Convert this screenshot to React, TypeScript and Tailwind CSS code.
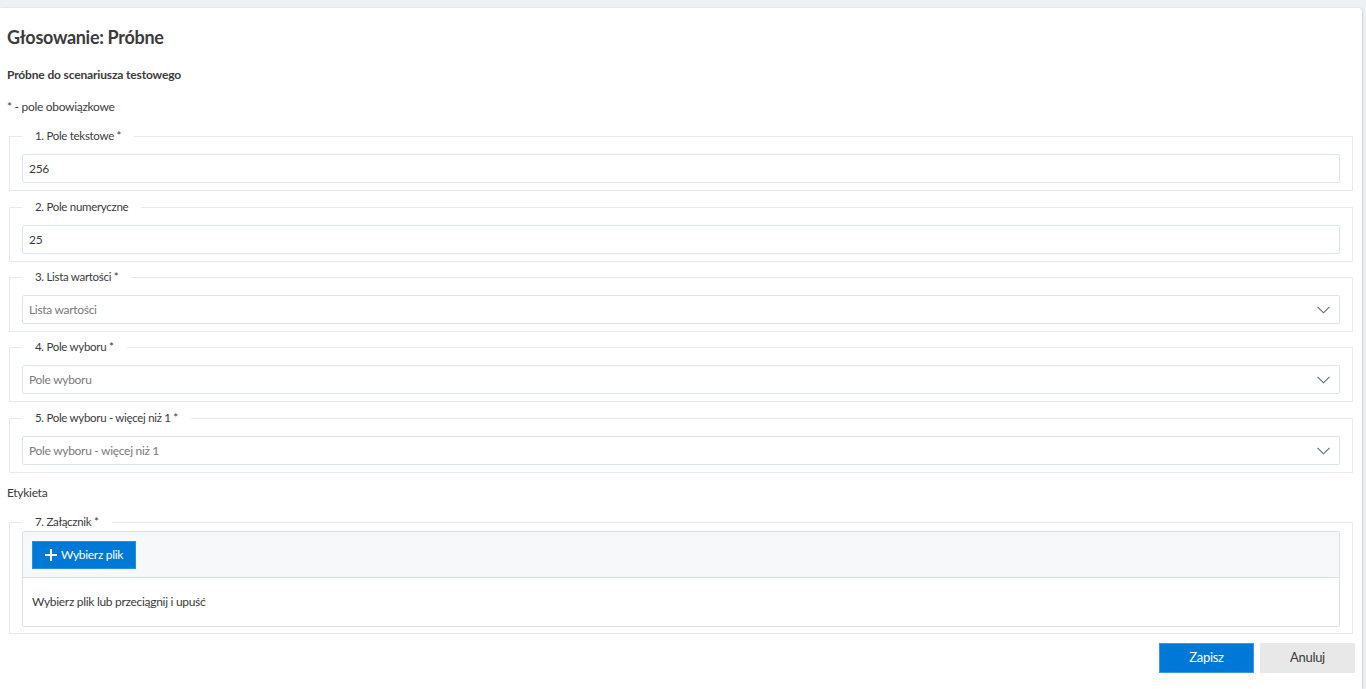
import { ReactNode } from "react";

const font = { fontFamily: '"Lato", "Liberation Sans", sans-serif' };

function Chevron() {
  return (
    <svg width="13" height="8" viewBox="0 0 13 8" fill="none" className="shrink-0">
      <path d="M0.5 0.8L6.5 6.8L12.5 0.8" stroke="#5a6b80" strokeWidth="1.1" />
    </svg>
  );
}

function Field({ legend, children, className = "" }: { legend: string; children: ReactNode; className?: string }) {
  return (
    <fieldset className={`mx-[2px] border border-[#e8ebee] px-[12px] pb-[7px] ${className}`}>
      <legend className="px-[13px] text-[11.5px] leading-[18px] text-[#3b3b3b]">{legend}</legend>
      {children}
    </fieldset>
  );
}

function TextInput({ value }: { value: string }) {
  return (
    <div className="mt-[9px] flex h-[29px] items-center rounded-[2px] border border-[#dbe3ec] px-[6px] text-[12px] text-[#3b3b3b]">
      {value}
    </div>
  );
}

function SelectBox({ placeholder }: { placeholder: string }) {
  return (
    <div className="mt-[9px] flex h-[29px] items-center justify-between rounded-[2px] border border-[#dbe3ec] pl-[6px] pr-[9px] text-[12px] text-[#7a7a7a]">
      <span>{placeholder}</span>
      <Chevron />
    </div>
  );
}

export default function App() {
  return (
    <div className="min-h-screen bg-[#eef1f4] pt-2 pr-1 tracking-[-0.3px]" style={font}>
      <div className="flex min-h-[681px] flex-col rounded-tr-[4px] bg-white px-[7px] pt-[17px] shadow-[1px_0_2px_rgba(0,0,0,0.12)]">
        <h1 className="text-[18px] font-bold leading-[24px] text-[#3b3b3b]">Głosowanie: Próbne</h1>
        <p className="mt-[18px] text-[12px] font-bold leading-[16px] tracking-[-0.15px] text-[#3b3b3b]">
          Próbne do scenariusza testowego
        </p>
        <p className="mt-[16px] text-[12px] leading-[16px] text-[#3b3b3b]">* - pole obowiązkowe</p>

        <Field legend="1. Pole tekstowe *" className="mt-[12px]">
          <TextInput value="256" />
        </Field>
        <Field legend="2. Pole numeryczne" className="mt-[7px]">
          <TextInput value="25" />
        </Field>
        <Field legend="3. Lista wartości *" className="mt-[6px]">
          <SelectBox placeholder="Lista wartości" />
        </Field>
        <Field legend="4. Pole wyboru *" className="mt-[6px]">
          <SelectBox placeholder="Pole wyboru" />
        </Field>
        <Field legend="5. Pole wyboru - więcej niż 1 *" className="mt-[7px]">
          <SelectBox placeholder="Pole wyboru - więcej niż 1" />
        </Field>

        <p className="mt-[12px] text-[12px] leading-[16px] text-[#3b3b3b]">Etykieta</p>

        <fieldset className="mx-[2px] mt-[12px] border border-[#e8ebee] px-[12px] pb-[6px]">
          <legend className="px-[13px] text-[11.5px] leading-[18px] text-[#3b3b3b]">7. Załącznik *</legend>
          <div className="rounded-[2px] border border-[#dde1e6]">
            <div className="border-b border-[#dde1e6] bg-[#f7f8fa] px-[9px] pt-[9px] pb-[8px]">
              <button className="flex h-[28px] items-center gap-[4px] border border-[#2b8ee0] bg-[#0078d7] px-[12px] text-[12px] text-white">
                <svg width="12" height="12" viewBox="0 0 12 12">
                  <path d="M6 0V12M0 6H12" stroke="white" strokeWidth="2" />
                </svg>
                Wybierz plik
              </button>
            </div>
            <div className="flex h-[48px] items-center px-[9px] text-[12px] text-[#3b3b3b]">
              Wybierz plik lub przeciągnij i upuść
            </div>
          </div>
        </fieldset>

        <div className="mt-[9px] flex justify-end gap-[6px]">
          <button className="h-[30px] w-[95px] border border-[#3d97e0] bg-[#0078d7] text-[13px] text-white">Zapisz</button>
          <button className="h-[30px] w-[95px] bg-[#e8e8e8] text-[13px] text-[#3b3b3b]">Anuluj</button>
        </div>
      </div>
    </div>
  );
}
